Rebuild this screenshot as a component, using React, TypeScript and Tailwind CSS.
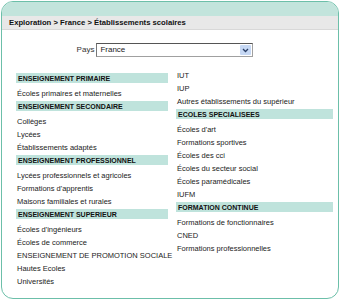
import React from 'react';

const left: { title: string; items: string[] }[] = [
    { title: 'ENSEIGNEMENT PRIMAIRE', items: ['Écoles primaires et maternelles'] },
    { title: 'ENSEIGNEMENT SECONDAIRE', items: ['Collèges', 'Lycées', 'Établissements adaptés'] },
    {
        title: 'ENSEIGNEMENT PROFESSIONNEL',
        items: ['Lycées professionnels et agricoles', "Formations d'apprentis", 'Maisons familiales et rurales'],
    },
    {
        title: 'ENSEIGNEMENT SUPERIEUR',
        items: [
            "Écoles d'ingénieurs",
            'Écoles de commerce',
            'ENSEIGNEMENT DE PROMOTION SOCIALE',
            'Hautes Ecoles',
            'Universités',
        ],
    },
];

const rightTop = ['IUT', 'IUP', 'Autres établissements du supérieur'];

const right: { title: string; items: string[] }[] = [
    {
        title: 'ECOLES SPECIALISEES',
        items: [
            "Écoles d'art",
            'Formations sportives',
            'Écoles des cci',
            'Écoles du secteur social',
            'Écoles paramédicales',
            'IUFM',
        ],
    },
    {
        title: 'FORMATION CONTINUE',
        items: ['Formations de fonctionnaires', 'CNED', 'Formations professionnelles'],
    },
];

function Header({ title }: { title: string }) {
    return (
        <div className="mt-[1px] mb-[4px] h-[10px] bg-[#bfe3dc] pl-[2px] text-[7px] leading-[11px] font-bold text-[#111] whitespace-nowrap">
            {title}
        </div>
    );
}

function Item({ label }: { label: string }) {
    return <div className="h-[13px] pl-[1px] text-[7.5px] leading-[13px] text-[#222] whitespace-nowrap">{label}</div>;
}

export default function App() {
    return (
        <div className="w-[340px] h-[300px] bg-white p-[1px] font-['Liberation_Sans',Arial,sans-serif]">
            <div className="h-full w-full rounded-[12px] border border-[#6cbfa9] overflow-hidden bg-white flex flex-col">
                <div className="h-[14px] bg-[#c2e4dc] shrink-0" />
                <div className="h-[14px] bg-[#e8e8e8] border-b border-[#d8d8d8] px-[7px] text-[7.7px] leading-[13px] font-bold text-[#111] shrink-0 whitespace-nowrap">
                    Exploration &gt; France &gt; Établissements scolaires
                </div>

                <div className="flex items-center justify-center gap-[2px] mt-[13px] pr-[10px]">
                    <span className="text-[8px] text-[#333]">Pays</span>
                    <div className="w-[157px] h-[14px] border border-[#a0a0a0] border-t-[#555] border-l-[#777] bg-white flex items-center justify-between pl-[3px] pr-[1px]">
                        <span className="text-[8px] text-[#222]">France</span>
                        <div className="w-[11px] h-[10px] bg-[#c6d8f4] rounded-[1px] flex items-center justify-center">
                            <svg width="7" height="5" viewBox="0 0 7 5">
                                <path d="M1 1 L3.5 3.5 L6 1" fill="none" stroke="#2a3f66" strokeWidth="1.3" />
                            </svg>
                        </div>
                    </div>
                </div>

                <div className="flex gap-[8px] pl-[14px] mt-[12px]">
                    <div className="w-[152px] pt-[3px]">
                        {left.map((g) => (
                            <div key={g.title}>
                                <Header title={g.title} />
                                {g.items.map((i) => (
                                    <Item key={i} label={i} />
                                ))}
                            </div>
                        ))}
                    </div>
                    <div className="w-[157px]">
                        {rightTop.map((i) => (
                            <Item key={i} label={i} />
                        ))}
                        {right.map((g) => (
                            <div key={g.title}>
                                <Header title={g.title} />
                                {g.items.map((i) => (
                                    <Item key={i} label={i} />
                                ))}
                            </div>
                        ))}
                    </div>
                </div>
            </div>
        </div>
    );
}
